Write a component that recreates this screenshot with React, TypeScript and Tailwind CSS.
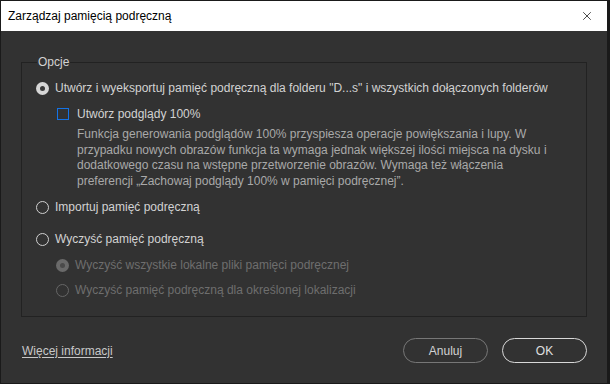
import { X } from 'lucide-react';

const font = { fontFamily: '"Segoe UI", "Liberation Sans", Arial, sans-serif' };

function Radio({ checked, disabled }: { checked?: boolean; disabled?: boolean }) {
  if (checked) {
    return (
      <span
        className={`w-[13px] h-[13px] rounded-full flex items-center justify-center shrink-0 ${
          disabled ? 'bg-[#6a6a6a]' : 'bg-[#d6d6d6]'
        }`}
      >
        <span className={`w-[5px] h-[5px] rounded-full ${disabled ? 'bg-[#4a4a4a]' : 'bg-[#3a3a3a]'}`} />
      </span>
    );
  }
  return (
    <span
      className={`w-[13px] h-[13px] rounded-full border shrink-0 ${
        disabled ? 'border-[#666666]' : 'border-[#d0d0d0]'
      }`}
    />
  );
}

export default function App() {
  return (
    <div
      className="w-[610px] h-[384px] bg-[#323232] border border-[#1a1a1a] border-r-[3px] flex flex-col text-[12px] text-[#d2d2d2]"
      style={font}
    >
      {/* Title bar */}
      <div className="h-[30px] bg-white flex items-center justify-between pl-[7px] pr-[13px] shrink-0">
        <span className="text-[12px] text-black">Zarządzaj pamięcią podręczną</span>
        <X className="w-[14px] h-[14px] text-black" strokeWidth={1.2} />
      </div>

      {/* Content */}
      <div className="flex-1 flex flex-col px-[20px] pt-[24px]">
        <fieldset className="border border-[#222222] h-[262px] pl-[14px] pr-[10px] pt-[11px]">
          <legend className="px-[1px] ml-[1px] text-[12px] text-[#d2d2d2] leading-[14px]">Opcje</legend>

          <div className="flex items-center gap-[6px] h-[16px]">
            <Radio checked />
            <span>Utwórz i wyeksportuj pamięć podręczną dla folderu "D...s" i wszystkich dołączonych folderów</span>
          </div>

          <div className="ml-[21px] mt-[10px]">
            <div className="flex items-center gap-[8px] h-[16px]">
              <span className="w-[12px] h-[12px] border border-[#1473e6] shrink-0" />
              <span>Utwórz podglądy 100%</span>
            </div>
            <p className="ml-[20px] mt-[5px] w-[478px] leading-[15.5px] text-[#a9a9a9]">
              Funkcja generowania podglądów 100% przyspiesza operacje powiększania i lupy. W przypadku nowych
              obrazów funkcja ta wymaga jednak większej ilości miejsca na dysku i dodatkowego czasu na wstępne
              przetworzenie obrazów. Wymaga też włączenia preferencji „Zachowaj podglądy 100% w pamięci
              podręcznej”.
            </p>
          </div>

          <div className="flex items-center gap-[6px] h-[16px] mt-[10px]">
            <Radio />
            <span>Importuj pamięć podręczną</span>
          </div>

          <div className="flex items-center gap-[6px] h-[16px] mt-[16px]">
            <Radio />
            <span>Wyczyść pamięć podręczną</span>
          </div>

          <div className="ml-[20px] mt-[10px] flex flex-col gap-[9px] text-[#6e6e6e]">
            <div className="flex items-center gap-[6px] h-[16px]">
              <Radio checked disabled />
              <span>Wyczyść wszystkie lokalne pliki pamięci podręcznej</span>
            </div>
            <div className="flex items-center gap-[6px] h-[16px]">
              <Radio disabled />
              <span>Wyczyść pamięć podręczną dla określonej lokalizacji</span>
            </div>
          </div>
        </fieldset>

        {/* Footer */}
        <div className="flex items-center justify-between mt-[21px]">
          <span className="underline underline-offset-[2px] text-[#c8c8c8] ml-[1px]">Więcej informacji</span>
          <div className="flex gap-[14px]">
            <button className="w-[85px] h-[25px] rounded-full border border-[#777777] text-[#d2d2d2] text-[12px]">
              Anuluj
            </button>
            <button className="w-[85px] h-[25px] rounded-full border border-[#d8d8d8] text-[#e0e0e0] text-[12px]">
              OK
            </button>
          </div>
        </div>
      </div>
    </div>
  );
}
